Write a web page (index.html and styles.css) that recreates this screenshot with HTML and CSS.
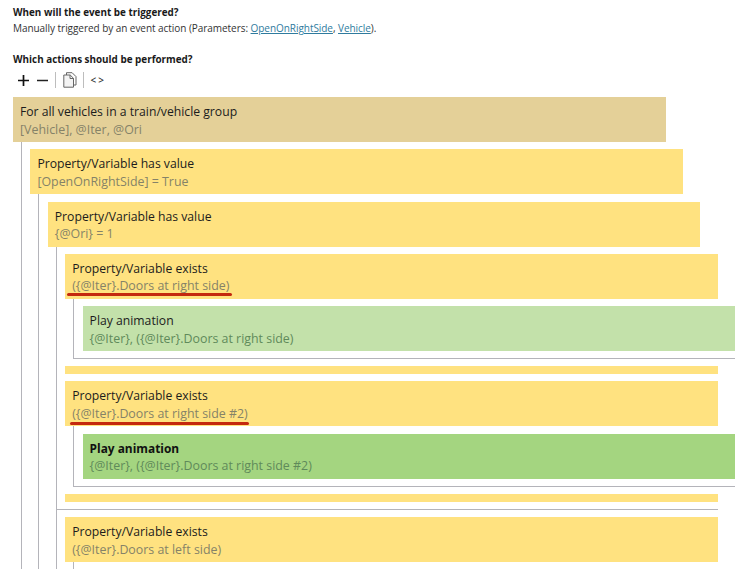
FILE: index.html
```html
<!DOCTYPE html>
<html lang="en">
<head>
<meta charset="utf-8">
<title>Event actions</title>
<link rel="stylesheet" href="styles.css">
</head>
<body>
<section class="intro">
  <h2 class="title">When will the event be triggered?</h2>
  <p class="desc">Manually triggered by an event action (Parameters: <a href="#">OpenOnRightSide</a>, <a href="#">Vehicle</a>).</p>
  <h2 class="title second">Which actions should be performed?</h2>
</section>
<div class="toolbar">
  <svg class="ic" width="13" height="13" viewBox="0 0 13 13"><path d="M6.5 1v11M1 6.5h11" stroke="#111" stroke-width="1.7" fill="none"/></svg>
  <svg class="ic" width="13" height="13" viewBox="0 0 13 13"><path d="M1 6.5h11" stroke="#222" stroke-width="1.5" fill="none"/></svg>
  <span class="bar"></span>
  <svg class="ic" width="14" height="16" viewBox="0 0 14 16"><path d="M3.5 3V.7h5.6l3.9 3.9V13h-2.5" stroke="#666" fill="none"/><path d="M.8 3h6.4l3.3 3.3v8.9H.8z" stroke="#666" fill="#f4f4f4"/><path d="M7 3v3.5h3.5" stroke="#666" fill="none"/></svg>
  <span class="bar"></span>
  <span class="code">&lt;&gt;</span>
</div>
<main class="tree">
  <div class="node">
    <div class="head brown"><div class="name">For all vehicles in a train/vehicle group</div><div class="args">[Vehicle], @Iter, @Ori</div></div>
    <div class="kids">
      <div class="node">
        <div class="head yellow"><div class="name">Property/Variable has value</div><div class="args">[OpenOnRightSide] = True</div></div>
        <div class="kids">
          <div class="node">
            <div class="head yellow"><div class="name">Property/Variable has value</div><div class="args">{@Ori} = 1</div></div>
            <div class="kids">
              <div class="node">
                <div class="head yellow"><div class="name">Property/Variable exists</div><div class="args">({@Iter}.Doors at right side)</div><span class="mark mark-a"></span></div>
                <div class="kids closed">
                  <div class="head green"><div class="name">Play animation</div><div class="args">{@Iter}, ({@Iter}.Doors at right side)</div></div>
                </div>
                <div class="foot"></div>
              </div>
              <div class="node next">
                <div class="head yellow"><div class="name">Property/Variable exists</div><div class="args">({@Iter}.Doors at right side #2)</div><span class="mark mark-b"></span></div>
                <div class="kids closed">
                  <div class="head green-strong"><div class="name strong">Play animation</div><div class="args">{@Iter}, ({@Iter}.Doors at right side #2)</div></div>
                </div>
                <div class="foot"></div>
              </div>
              <div class="sep"></div>
              <div class="node">
                <div class="head yellow"><div class="name">Property/Variable exists</div><div class="args">({@Iter}.Doors at left side)</div></div>
                <div class="kids open-end"></div>
              </div>
            </div>
          </div>
        </div>
      </div>
    </div>
  </div>
</main>
</body>
</html>
```

FILE: styles.css
```css
:root {
  --w: 652.5px;
}
* {
  box-sizing: border-box;
}
html, body {
  margin: 0;
  height: 569px;
  overflow: hidden;
  background: #fff;
}
body {
  padding: 5px 0 0 13px;
  font-family: "Open Sans", "Noto Sans", sans-serif;
  color: #1a1a1a;
}
.title {
  margin: 0;
  font-size: 9.9px;
  line-height: 14px;
  font-weight: 700;
}
.second {
  margin-top: 17px;
}
.desc {
  margin: 2px 0 0;
  font-size: 10px;
  letter-spacing: -0.05px;
  line-height: 14px;
  color: #333;
}
.desc a {
  color: #2f7b9e;
}
.toolbar {
  display: flex;
  align-items: center;
  height: 20px;
  margin-top: 4px;
  padding-left: 3.5px;
}
.ic {
  flex: none;
  margin-right: 6px;
}
.bar {
  flex: none;
  width: 1px;
  height: 16px;
  margin: 0 7px 0 0;
  background: #bdbdbd;
}
.code {
  font-size: 10px;
  font-weight: 600;
  letter-spacing: 2px;
  color: #333;
}
.tree {
  margin-top: 7px;
}
.head {
  position: relative;
  width: var(--w);
  height: 45px;
  padding: 6px 7px 0;
  font-size: 12.4px;
  line-height: 17.5px;
  white-space: nowrap;
}
.brown { background: #e4d098; }
.yellow { background: #ffe280; }
.green { background: #c3e1aa; }
.green-strong { background: #a4d580; }
.name { font-size: 12.2px; color: #1c1c1c; }
.strong { font-size: 11.9px; font-weight: 700; color: #111; }
.args { color: #858268; }
.green .args, .green-strong .args { color: #5f8a5a; }
.kids {
  margin-left: 8px;
  padding: 7.25px 0 0 8.4px;
  border-left: 1px solid #b4b4ba;
}
.closed {
  width: calc(var(--w) + 9.4px);
  padding-bottom: 7px;
  border-bottom: 1px solid #b4b4ba;
}
.open-end {
  height: 30px;
}
.foot {
  width: var(--w);
  height: 8px;
  margin-top: 7px;
  background: #ffe280;
}
.next {
  margin-top: 7.25px;
}
.sep {
  width: calc(var(--w) + 9.4px);
  margin: 7px 0 7.5px -9.4px;
  border-top: 1px solid #b4b4ba;
}
.mark {
  position: absolute;
  height: 3px;
  border-radius: 2px;
  background: #c4280e;
}
.mark-a {
  left: 1.5px;
  top: 39.5px;
  width: 165px;
}
.mark-b {
  left: 5px;
  top: 40.5px;
  width: 179px;
}
```
